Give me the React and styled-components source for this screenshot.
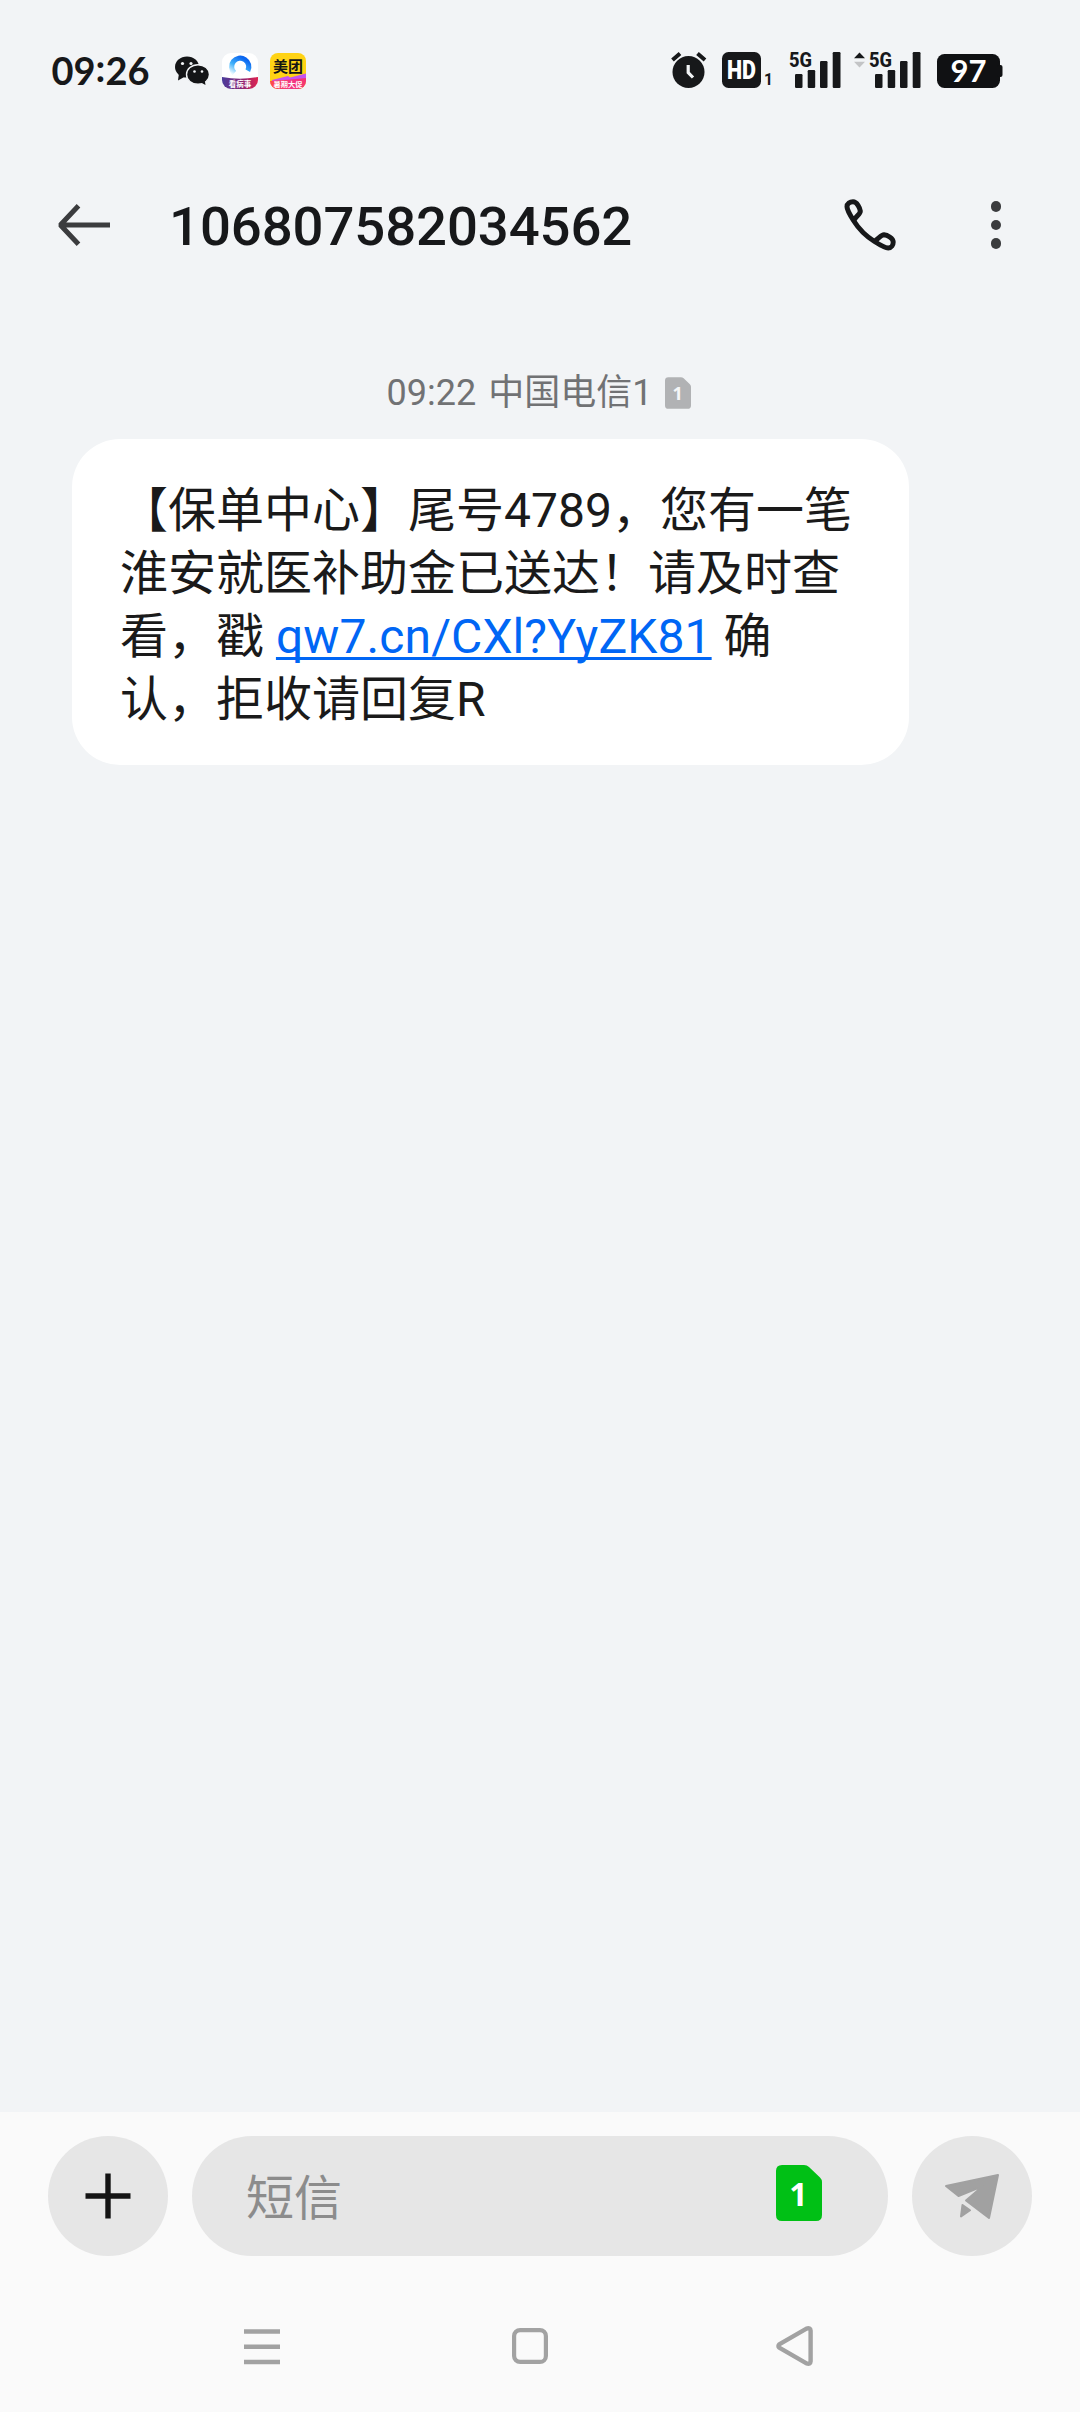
import React from 'react';
import styled, { createGlobalStyle } from 'styled-components';


function App() {
    return (
        <>
            <GlobalStyle />
            <Screen>
                <StatusBar />
                <Header number="106807582034562" />
                <Thread>
                    <Stamp>
                        <span>09:22 中国电信1</span>
                        <SimIcon width={26} height={32} color="#b1b2b4" textColor="#f5f6f7" />
                    </Stamp>
                    <Bubble>
                        【保单中心】尾号4789，您有一笔<br />
                        淮安就医补助金已送达！请及时查<br />
                        看，戳 <Link>qw7.cn/CXl?YyZK81</Link> 确<br />
                        认，拒收请回复R
                    </Bubble>
                </Thread>
                <Footer>
                    <Composer />
                    <NavBar />
                </Footer>
            </Screen>
        </>
    )
}

export default App

function StatusBar() {
    return (
        <StatusWrap>
            <Clock>09<Colon>:</Colon>26</Clock>
            <AppIcons>
                <WechatIcon />
                <BrowserIcon />
                <MeituanIcon />
            </AppIcons>
            <SystemIcons>
                <AlarmIcon />
                <HdIcon />
                <SignalIcon />
                <SignalIcon activity />
                <BatteryIcon level="97" />
            </SystemIcons>
        </StatusWrap>
    )
}

function Header({ number }) {
    return (
        <HeaderWrap>
            <svg width="54" height="42" viewBox="0 0 54 42" fill="none" stroke="#3b3c3e" strokeWidth="5">
                <path d="M3 21H53M21.5 1.8L3.4 21L21.5 40.2" strokeLinejoin="bevel" />
            </svg>
            <Title>{number}</Title>
            <svg width="52" height="52" viewBox="0 0 52 52" fill="none" stroke="#17181a" strokeWidth="5" strokeLinejoin="round">
                <path d="M10.5 20.5C12.5 17 16.4 15 16.3 12C16 9 13 2.8 9 2.8C6 2.8 3 4.5 3 7.8C3 11 6 16 9.5 21.5C14.5 29.5 22.5 37.5 30.5 42.5C36 46 41 49 44.2 49C47.5 49 49.2 46 49.2 43C49.2 39 43 36 40 35.7C37 35.6 35 39.5 31.5 41.5" />
            </svg>
            <Dots>
                <Dot />
                <Dot />
                <Dot />
            </Dots>
        </HeaderWrap>
    )
}

function Composer() {
    return (
        <ComposerWrap>
            <RoundButton>
                <svg width="46" height="46" viewBox="0 0 46 46" stroke="#141414" strokeWidth="5.4">
                    <path d="M0.5 23H45.5M23 0.5V45.5" />
                </svg>
            </RoundButton>
            <Field>
                <Placeholder>短信</Placeholder>
                <SimIcon width={46} height={56} color="#00c015" textColor="#fff" />
            </Field>
            <RoundButton>
                <svg width="56" height="48" viewBox="0 0 56 48" fill="#a1a1a1" stroke="#a1a1a1" strokeWidth="2" strokeLinejoin="round">
                    <path d="M2 14L54 3L45 46L22 28.5L39 14L14.5 24Z" />
                    <path d="M18.5 33L26 38.3L17 44.5Z" />
                </svg>
            </RoundButton>
        </ComposerWrap>
    )
}

function NavBar() {
    return (
        <NavWrap>
            <svg width="36" height="37" viewBox="0 0 36 37" stroke="#a2a2a2" strokeWidth="4.6">
                <path d="M0 3.5H36M0 18.8H36M0 34H36" />
            </svg>
            <svg width="36" height="36" viewBox="0 0 36 36" fill="none" stroke="#a2a2a2" strokeWidth="4.2">
                <rect x="2.1" y="2.1" width="31.8" height="31.8" rx="6" />
            </svg>
            <svg width="37" height="40" viewBox="0 0 37 40" fill="none" stroke="#a2a2a2" strokeWidth="4.4" strokeLinejoin="round">
                <path d="M3.2 18.3L30.5 2.6Q34.5 1.5 34.6 4.5V35.5Q34.5 38.5 30.5 37.4L3.2 21.7Q1.8 20 3.2 18.3Z" />
            </svg>
        </NavWrap>
    )
}

function SimIcon({ width, height, color, textColor }) {
    return (
        <svg width={width} height={height} viewBox="0 0 46 56">
            <path d="M6 0H28Q31 0 33 2L44 12.5Q46 14.5 46 17V50Q46 56 40 56H6Q0 56 0 50V6Q0 0 6 0Z" fill={color} />
            <text x="22.5" y="40.5" textAnchor="middle" fill={textColor} fontFamily="Noto Sans, sans-serif" fontWeight="700" fontSize="32">1</text>
        </svg>
    )
}

function WechatIcon() {
    return (
        <svg width="34" height="30" viewBox="0 0 34 30">
            <g fill="#141517">
                <ellipse cx="12" cy="11" rx="12" ry="10.5" />
                <path d="M4 17L3 24.5L11 20Z" />
                <ellipse cx="23" cy="18.5" rx="11.5" ry="9.8" stroke="#f2f4f6" strokeWidth="1.4" />
                <path d="M25 26L30.5 29L29.5 23Z" />
            </g>
            <g fill="#f2f4f6">
                <circle cx="7.5" cy="7.5" r="1.6" />
                <circle cx="16" cy="7.5" r="1.6" />
                <circle cx="19.5" cy="15.5" r="1.3" />
                <circle cx="27" cy="15.5" r="1.3" />
            </g>
        </svg>
    )
}

function BrowserIcon() {
    return (
        <svg width="36" height="36" viewBox="0 0 36 36">
            <defs>
                <clipPath id="browserClip"><rect width="36" height="36" rx="9" /></clipPath>
                <linearGradient id="browserRing" x1="0" y1="1" x2="0.7" y2="0">
                    <stop offset="0" stopColor="#e6f8ff" />
                    <stop offset="0.45" stopColor="#3fb0fa" />
                    <stop offset="1" stopColor="#0b66f0" />
                </linearGradient>
                <linearGradient id="browserBand" x1="0" y1="0" x2="1" y2="0">
                    <stop offset="0" stopColor="#4a3c9c" />
                    <stop offset="0.55" stopColor="#8a2674" />
                    <stop offset="1" stopColor="#e02350" />
                </linearGradient>
            </defs>
            <g clipPath="url(#browserClip)">
                <rect width="36" height="36" fill="#fff" />
                <path d="M12.3 20A8.6 8.6 0 1 1 25.8 17.8" fill="none" stroke="url(#browserRing)" strokeWidth="5.2" />
                <path d="M0 24Q18 27.5 36 24V36H0Z" fill="url(#browserBand)" />
                <text x="18" y="34" textAnchor="middle" fontFamily="Noto Sans CJK SC, sans-serif" fontSize="7.5" fontWeight="700" fill="#fff">看病事</text>
            </g>
        </svg>
    )
}

function MeituanIcon() {
    return (
        <svg width="36" height="36" viewBox="0 0 36 36">
            <defs>
                <clipPath id="meituanClip"><rect width="36" height="36" rx="8" /></clipPath>
                <linearGradient id="meituanBand" x1="0" y1="0" x2="1" y2="0">
                    <stop offset="0" stopColor="#ff4a4a" />
                    <stop offset="0.6" stopColor="#f23585" />
                    <stop offset="1" stopColor="#f5366e" />
                </linearGradient>
            </defs>
            <g clipPath="url(#meituanClip)">
                <rect width="36" height="36" fill="#ffd315" />
                <path d="M2 27L18 23L20 24.5L36 20.5V29H2Z" fill="#c653ee" />
                <path d="M0 28L20 26.5L36 25V36H0Z" fill="url(#meituanBand)" />
                <text x="18" y="18.5" textAnchor="middle" fontFamily="Noto Sans CJK SC, sans-serif" fontSize="15" fontWeight="700" fill="#141414">美团</text>
                <text x="18" y="33.7" textAnchor="middle" fontFamily="Noto Sans CJK SC, sans-serif" fontSize="7.2" fontWeight="700" fill="#fff">暑期大促</text>
            </g>
        </svg>
    )
}

function AlarmIcon() {
    return (
        <svg width="36" height="36" viewBox="0 0 36 36" fill="none">
            <circle cx="17.5" cy="20" r="16" fill="#17181a" />
            <path d="M1.5 8L9 1.5M34 8L26.5 1.5" stroke="#17181a" strokeWidth="4" />
            <path d="M17.2 13V20.5L22 25.5" stroke="#f2f4f6" strokeWidth="3.2" />
        </svg>
    )
}

function HdIcon() {
    return (
        <svg width="52" height="36" viewBox="0 0 52 36">
            <rect width="39" height="36" rx="6.5" fill="#17181a" />
            <text x="5" y="27" textLength="29" lengthAdjust="spacingAndGlyphs" fontFamily="Roboto, sans-serif" fontWeight="900" fontSize="25.5" fill="#fff">HD</text>
            <text x="42" y="33" textLength="9" lengthAdjust="spacingAndGlyphs" fontFamily="Roboto, sans-serif" fontWeight="700" fontSize="17" fill="#17181a">1</text>
        </svg>
    )
}

function SignalIcon({ activity }) {
    return (
        <svg width={activity ? 67 : 52} height="38" viewBox={activity ? '-15 -1 67 38' : '0 -1 52 38'} fill="#17181a">
            {activity && //data arrows, only the uplink is lit
                <>
                    <path d="M-15 6.3L-9.5 0.5L-4 6.3Z" />
                    <path d="M-15 9.8H-4L-9.5 15.500Z" fill="#c3c4c6" />
                </>
            }
            <text x="0" y="15" textLength="23" lengthAdjust="spacingAndGlyphs" fontFamily="Roboto, sans-serif" fontWeight="800" fontSize="21">5G</text>
            <rect x="6" y="22" width="7.5" height="14" rx="1.2" />
            <rect x="18.7" y="18" width="7.5" height="18" rx="1.2" />
            <rect x="31" y="9" width="7.5" height="27" rx="1.2" />
            <rect x="43.7" y="0" width="7.8" height="36" rx="1.2" />
        </svg>
    )
}

function BatteryIcon({ level }) {
    return (
        <svg width="66" height="36" viewBox="0 -2 66 36">
            <rect width="63" height="34" rx="7.5" fill="#101113" />
            <rect x="60" y="11" width="5.5" height="12" rx="2" fill="#101113" />
            <text x="31.5" y="28.3" textAnchor="middle" fontFamily="Lato, sans-serif" fontWeight="700" fontSize="31" fill="#fff">{level}</text>
        </svg>
    )
}

const GlobalStyle = createGlobalStyle`
    body{
        margin: 0;
        background: #f2f4f6;
    }

    svg{
        display: block;
        flex: none;
        overflow: visible;
    }
`

const Screen = styled.div`
    width: 1080px;
    height: 2412px;
    display: flex;
    flex-direction: column;
    overflow: hidden;
    background: #f2f4f6;
    color: #17181a;
    font-family: Roboto, "Noto Sans CJK SC", sans-serif;
`

const StatusWrap = styled.div`
    height: 140px;
    box-sizing: border-box;
    padding: 0 77px 0 51.5px;
    display: flex;
    align-items: center;
`

const Clock = styled.div`
    width: 123.5px;
    padding-bottom: 3px;
    font-family: Lato, sans-serif;
    font-size: 38px;
    font-weight: 700;
    line-height: 40px;
`

const Colon = styled.span`
    vertical-align: 3px;
`

const AppIcons = styled.div`
    padding-top: 2px;
    display: flex;
    align-items: center;
    gap: 12.5px;
`

const SystemIcons = styled.div`
    margin-left: auto;
    display: flex;
    align-items: center;

    svg + svg{
        margin-left: 15px;
    }

    svg:nth-child(4){
        margin-left: 13px;
    }

    svg:last-child{
        margin-left: 16.5px;
    }
`

const HeaderWrap = styled.div`
    height: 170px;
    box-sizing: border-box;
    padding: 0 79px 0 57px;
    display: flex;
    align-items: center;
`

const Title = styled.div`
    flex: 1;
    margin-left: 58px;
    padding-top: 2px;
    font-size: 54.5px;
    font-weight: 500;
    line-height: 64px;
    letter-spacing: -0.1px;
`

const Dots = styled.div`
    margin-left: 95px;
    display: flex;
    flex-direction: column;
    gap: 8px;
`

const Dot = styled.div`
    width: 10.5px;
    height: 10.5px;
    border-radius: 50%;
    background: #3b3c3e;
`

const Thread = styled.div`
    flex: 1;
    padding: 58px 74px 0 72px;
`

const Stamp = styled.div`
    height: 50px;
    margin-bottom: 21px;
    display: flex;
    justify-content: center;
    align-items: center;
    gap: 13px;
    color: #717274;
    font-size: 36px;
    line-height: 50px;
    word-spacing: 3px;
`

const Bubble = styled.div`
    width: 837px;
    height: 326px;
    box-sizing: border-box;
    padding: 40px 48px 34px;
    border-radius: 48px;
    background: #fff;
    color: #1a1a1a;
    font-size: 48px;
    line-height: 63px;
    white-space: nowrap;
`

const Link = styled.a`
    color: #0066f5;
    letter-spacing: 0.1px;
    text-decoration: underline;
    text-decoration-thickness: 2.5px;
    text-underline-offset: 4px;
    text-decoration-skip-ink: none;
`

const Footer = styled.div`
    height: 300px;
    background: #fafafa;
`

const ComposerWrap = styled.div`
    padding: 24px 48px 0;
    display: flex;
    gap: 24px;
`

const RoundButton = styled.div`
    width: 120px;
    height: 120px;
    display: flex;
    justify-content: center;
    align-items: center;
    border-radius: 50%;
    background: #e6e6e6;
`

const Field = styled.div`
    flex: 1;
    height: 120px;
    box-sizing: border-box;
    padding: 0 66px 6px 54px;
    display: flex;
    justify-content: space-between;
    align-items: center;
    border-radius: 60px;
    background: #e6e6e6;
`

const Placeholder = styled.div`
    padding-top: 12px;
    color: #8c8c8c;
    font-size: 48px;
    line-height: 60px;
`

const NavWrap = styled.div`
    padding: 70px 0 0 244px;
    display: grid;
    grid-template-columns: 268px 263.5px 37px;
    align-items: center;
`
